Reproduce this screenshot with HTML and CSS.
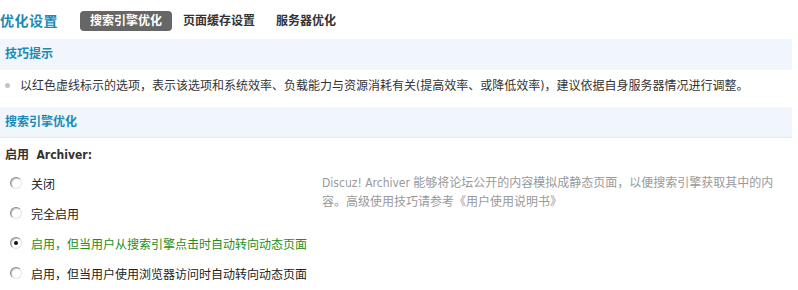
FILE: index.html
```html
<!DOCTYPE html>
<html lang="zh-CN">
<head>
<meta charset="utf-8">
<title>优化设置</title>
<link rel="stylesheet" href="styles.css">
</head>
<body>
<div class="topbar">
  <h1 class="title">优化设置</h1>
  <ul class="tabs">
    <li class="tab active">搜索引擎优化</li>
    <li class="tab">页面缓存设置</li>
    <li class="tab">服务器优化</li>
  </ul>
</div>
<div class="band">技巧提示</div>
<ul class="tips">
  <li>以红色虚线标示的选项，表示该选项和系统效率、负载能力与资源消耗有关(提高效率、或降低效率)，建议依据自身服务器情况进行调整。</li>
</ul>
<div class="band band-line">搜索引擎优化</div>
<div class="setting-label">启用&nbsp; Archiver:</div>
<div class="setting">
  <div class="options">
    <label class="option"><span class="radio"></span>关闭</label>
    <label class="option"><span class="radio"></span>完全启用</label>
    <label class="option checked"><span class="radio on"></span>启用，但当用户从搜索引擎点击时自动转向动态页面</label>
    <label class="option"><span class="radio"></span>启用，但当用户使用浏览器访问时自动转向动态页面</label>
  </div>
  <div class="desc">Discuz! Archiver 能够将论坛公开的内容模拟成静态页面，以便搜索引擎获取其中的内容。高级使用技巧请参考《用户使用说明书》</div>
</div>
</body>
</html>
```
FILE: styles.css
```css
* { box-sizing: border-box; }
body {
  margin: 0;
  background: #fff;
  font-family: "DejaVu Sans Condensed", "DejaVu Sans", "Noto Sans CJK SC", sans-serif;
  font-size: 12px;
  letter-spacing: 0;
  color: #333;
}
.topbar {
  height: 39px;
  display: flex;
  align-items: center;
  padding-top: 2px;
}
.title {
  margin: 0 22px 0 0;
  font-size: 14px;
  letter-spacing: 0.5px;
  font-weight: bold;
  color: #1a8ab5;
  line-height: 20px;
}
.tabs {
  display: flex;
  list-style: none;
  margin: 0;
  padding: 0;
  gap: 1px;
}
.tab {
  height: 20px;
  line-height: 20px;
  padding: 0 10px;
  font-weight: bold;
  color: #333;
  border-radius: 4px;
}
.tab.active {
  background: #666;
  color: #fff;
}
.band {
  height: 31px;
  line-height: 31px;
  margin-right: 6px;
  padding-left: 5px;
  background: #f0f6fc;
  color: #1a8ab5;
  font-weight: bold;
}
.band-line {
  height: 31px;
  line-height: 30px;
  border-bottom: 1px solid #e3eaf1;
}
.tips {
  list-style: none;
  margin: 0;
  padding: 0 0 5px 0;
  height: 37px;
}
.tips li {
  position: relative;
  line-height: 32px;
  padding-left: 20px;
}
.tips li::before {
  content: "";
  position: absolute;
  left: 5px;
  top: 13px;
  width: 5px;
  height: 5px;
  border-radius: 50%;
  background: #c4c4c4;
}
.setting-label {
  height: 30px;
  padding: 5px 0 0 5px;
  line-height: 25px;
  font-weight: bold;
  color: #333;
}
.setting {
  display: grid;
  grid-template-columns: 322px 470px;
  align-items: start;
}
.options {
  display: flex;
  flex-direction: column;
}
.option {
  display: flex;
  align-items: center;
  height: 30px;
  padding-left: 10px;
  color: #222;
}
.option.checked { color: #1e8c1e; }
.radio {
  width: 12px;
  height: 12px;
  margin-right: 9px;
  border-radius: 50%;
  border: 1px solid;
  border-color: #8a8a8a #e4e4e4 #e4e4e4 #8a8a8a;
  background: #fff;
  box-shadow: inset 1px 1px 0 #c8c8c8;
  position: relative;
  flex: none;
}
.radio.on::after {
  content: "";
  position: absolute;
  left: 3px;
  top: 3px;
  width: 4px;
  height: 4px;
  border-radius: 50%;
  background: #111;
}
.desc {
  padding-top: 6px;
  line-height: 19px;
  color: #999;
}
```
